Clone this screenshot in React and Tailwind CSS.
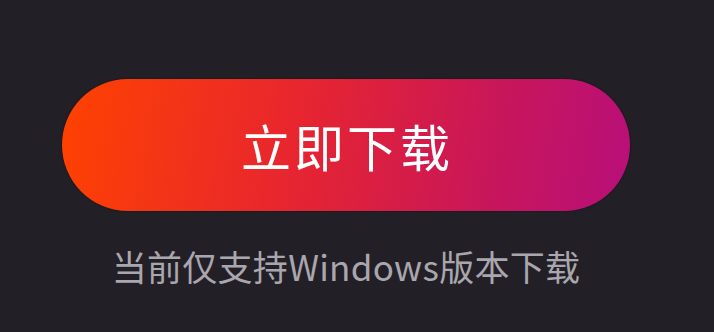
export default function App() {
  return (
    <div className="w-[714px] h-[332px] bg-[#222026] flex flex-col items-start" style={{ fontFamily: '"Noto Sans CJK SC", "Noto Sans", sans-serif' }}>
      <div className="mt-[79px] ml-[62px] w-[568px] h-[132px] rounded-full bg-[linear-gradient(100deg,#ff4200_0%,#e8262e_40%,#c8165a_75%,#b80f7a_100%)] flex items-center justify-center shadow-[0_0_2px_rgba(0,0,0,0.6)]">
        <span className="text-white text-[50px] leading-none font-normal tracking-[3px] mt-[-1px] ml-[2px]">立即下载</span>
      </div>
      <div className="mt-[37px] ml-[62px] w-[568px] text-center text-[#aaa6ae] text-[35px] leading-none tracking-[0.3px]">当前仅支持Windows版本下载</div>
    </div>
  );
}
